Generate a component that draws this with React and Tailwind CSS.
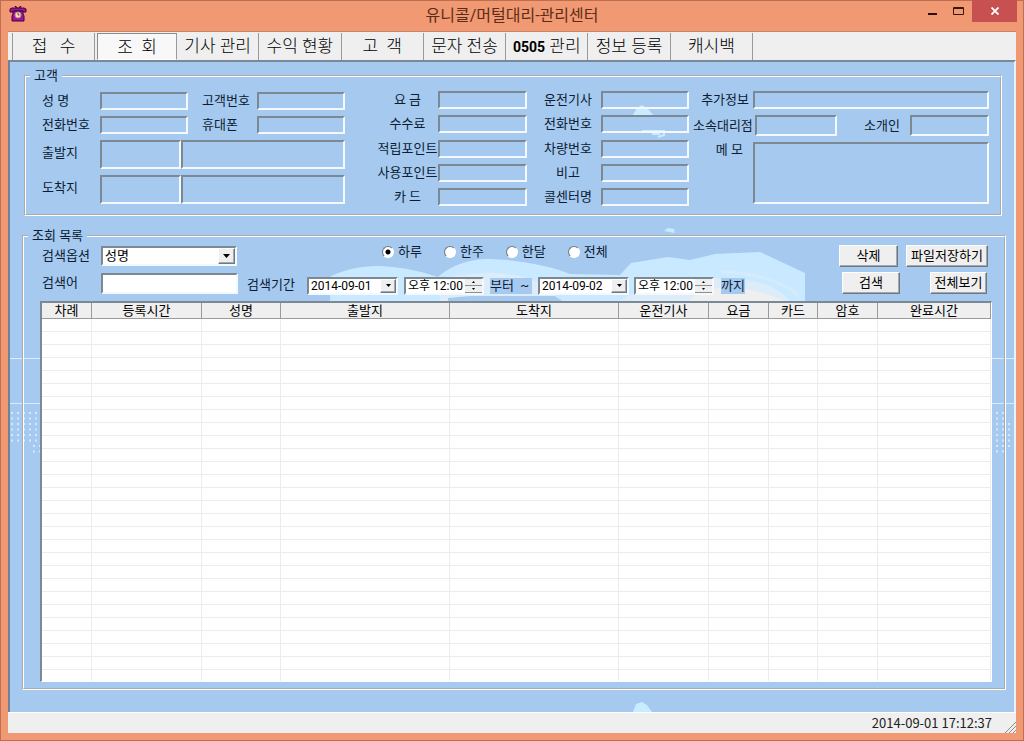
import { useState } from 'react'

const tabs = ['기사 관리', '수익 현황', '고  객', '문자 전송', '0505 관리', '정보 등록', '캐시백']

const columns = [
  { label: '차례', width: 50 },
  { label: '등록시간', width: 110 },
  { label: '성명', width: 79 },
  { label: '출발지', width: 169 },
  { label: '도착지', width: 169 },
  { label: '운전기사', width: 90 },
  { label: '요금', width: 60 },
  { label: '카드', width: 49 },
  { label: '암호', width: 60 },
  { label: '완료시간' },
]

const rows = Array.from({ length: 27 }, (_, i) => i)

const sunken = 'border-2 border-t-[#7c8894] border-l-[#7c8894] border-r-[#f4f9ff] border-b-[#f4f9ff] outline-none'
const raised = 'border border-t-white border-l-white border-r-[#6f7780] border-b-[#6f7780] bg-[#efefef] shadow-[inset_-1px_-1px_0_#a5a9ae]'

function PhoneIcon() {
  return (
    <svg width="18" height="16" viewBox="0 0 18 16" aria-hidden="true">
      <path d="M6 0l2 2M12 0l-2 2" stroke="#2a0a2a" strokeWidth="1.2" />
      <path d="M1 5V3l2-1h12l2 1v3h-4V5H5v1H1z" fill="#a3129f" stroke="#3a0638" />
      <path d="M4 5h10v3l1 2v5H3v-5l1-2z" fill="#a3129f" stroke="#3a0638" />
      <circle cx="9" cy="9" r="3" fill="#f6dfc0" stroke="#c9896c" />
      <path d="M9 7v2h1.500" stroke="#553" fill="none" />
    </svg>
  )
}

function Dots({ x, cols, y, count }) {
  return Array.from({ length: cols * count }, (_, i) => (
    <rect key={i} x={x + (i % cols) * 6} y={y + Math.floor(i / cols) * 5.5} width="2" height="2" fill="#d4e9ff" />
  ))
}

function Wallpaper() {
  return (
    <svg className="absolute inset-0 w-full h-full" viewBox="10 62 1004 650" preserveAspectRatio="none" aria-hidden="true">
      <path d="M10 358.500H1014M10 403.500H1014" stroke="#d8ebff" />
      <path d="M330 301L331 276C350 267 372 264 392 267C412 269 425 273 438 277C452 264 474 258 490 259C520 260 552 266 570 274L620 275L631 263L668 257L690 260L715 254L760 252L805 273V301Z" fill="#c8e9ff" />
      <path d="M438 279C460 274 480 273 496 273C530 276 550 284 560 301H620C640 284 690 277 730 278C760 280 780 288 790 301H440Z" fill="#dcedf9" />
      <path d="M722 272C752 272 785 282 800 297" stroke="#d6ebfa" strokeWidth="3" fill="none" />
      <path d="M690 301C700 285 740 281 784 301Z" fill="#efefef" />
      <path d="M448 301V298L470 296H555L562 301Z" fill="#a6c9ef" />
      <path d="M632 116L637 108L642 105L648 109L655 117Z" fill="#cbe9ff" />
      <path d="M642 131H664V135L658 137M652 134H660" stroke="#cbe9ff" strokeWidth="2" fill="none" />
      <path d="M664 231L668 228L674 229L675 233Z" fill="#cbe9ff" />
      <path d="M633 712L636 704L642 702L647 705L652 712Z" fill="#c8ecff" />
      <Dots x={11} cols={5} y={412} count={6} />
      <Dots x={33} cols={2} y={445} count={2} />
      <Dots x={996} cols={2} y={412} count={8} />
      <Dots x={1008} cols={1} y={423} count={5} />
    </svg>
  )
}

function Field({ id, label, labelClass = '', className = '' }) {
  return (
    <>
      <label htmlFor={id} className={`shrink-0 whitespace-pre ${labelClass}`}>{label}</label>
      <input id={id} readOnly className={`min-w-0 bg-transparent ${sunken} ${className}`} />
    </>
  )
}

function AddressField({ id, label }) {
  return (
    <div className="flex h-[29px] items-center">
      <Field id={id} label={label} labelClass="w-[58px] pb-1" className="h-full w-[81px]" />
      <input aria-label={`${label} 상세`} readOnly className={`h-full min-w-0 flex-1 bg-transparent ${sunken}`} />
    </div>
  )
}

function DateBox({ label, value }) {
  return (
    <div className={`relative flex h-[18px] w-[91px] shrink-0 bg-white ${sunken}`}>
      <select aria-label={label} defaultValue={value} className="w-full appearance-none bg-transparent pl-[2px] text-xs leading-[14px] text-black outline-none">
        <option>{value}</option>
      </select>
      <span className={`pointer-events-none absolute inset-y-0 right-0 flex w-4 items-center justify-center ${raised}`}>
        <svg width="5" height="3" viewBox="0 0 5 3" aria-hidden="true"><path d="M0 0h5L2.500 3z" /></svg>
      </span>
    </div>
  )
}

function TimeBox({ label }) {
  return (
    <div className={`flex h-[18px] w-[80px] shrink-0 bg-white ${sunken}`}>
      <input aria-label={label} defaultValue="오후 12:00" className="min-w-0 flex-1 bg-transparent pl-[2px] text-xs leading-[14px] text-black outline-none" />
      <div className="flex w-[17px] flex-col">
        <button aria-label={`${label} 증가`} className="flex flex-1 items-center justify-center border-b border-[#8b8f94] bg-[#efefef]">
          <svg width="3" height="2" viewBox="0 0 3 2" aria-hidden="true"><path d="M0 2h3L1.500 0z" /></svg>
        </button>
        <button aria-label={`${label} 감소`} className="flex flex-1 items-center justify-center border-b border-[#8b8f94] bg-[#efefef]">
          <svg width="3" height="2" viewBox="0 0 3 2" aria-hidden="true"><path d="M0 0h3L1.500 2z" /></svg>
        </button>
      </div>
    </div>
  )
}

function CustomerPanel() {
  return (
    <fieldset className="relative mr-3 ml-[14px] border-2 border-white pt-[7px] pr-[11px] pb-2 pl-4 [border-style:groove]">
      <legend className="-ml-3 px-1 leading-4">고객</legend>
      <div className="flex min-h-[115px]">
        <div className="flex w-[303px] shrink-0 flex-col gap-[6px] pt-px">
          {[['name', '성 명', 'no', '고객번호'], ['tel', '전화번호', 'mobile', '휴대폰']].map(([a, al, b, bl]) => (
            <div key={a} className="flex h-[18px] items-center">
              <Field id={a} label={al} labelClass="w-[58px]" className="h-full w-[88px]" />
              <Field id={b} label={bl} labelClass="ml-[14px] w-[55px]" className="h-full flex-1" />
            </div>
          ))}
          <AddressField id="from" label="출발지" />
          <AddressField id="to" label="도착지" />
        </div>
        <div className="ml-8 flex w-[150px] shrink-0 flex-col justify-between">
          {[['fare', '요 금'], ['fee', '수수료'], ['save', '적립포인트'], ['use', '사용포인트'], ['card', '카 드']].map(([id, label]) => (
            <div key={id} className="flex h-[18px] items-center">
              <Field id={id} label={label} labelClass="w-[61px] text-center" className="h-full flex-1" />
            </div>
          ))}
        </div>
        <div className="ml-4 flex w-[146px] shrink-0 flex-col justify-between">
          {[['driver', '운전기사'], ['dtel', '전화번호'], ['car', '차량번호'], ['note', '비고'], ['center', '콜센터명']].map(([id, label]) => (
            <div key={id} className="flex h-[18px] items-center">
              <Field id={id} label={label} labelClass="w-[58px] pr-2 text-center" className="h-full flex-1" />
            </div>
          ))}
        </div>
        <div className="ml-1 flex min-w-0 flex-1 flex-col gap-[6px]">
          <div className="flex h-[18px] items-center">
            <Field id="extra" label="추가정보" labelClass="w-[60px] pr-1 text-right" className="h-full flex-1" />
          </div>
          <div className="flex h-[21px] items-center">
            <Field id="agency" label="소속대리점" labelClass="w-[62px]" className="h-full w-[82px]" />
            <Field id="ref" label="소개인" labelClass="ml-auto w-[46px]" className="h-full w-[79px]" />
          </div>
          <div className="flex flex-1">
            <label htmlFor="memo" className="w-[60px] shrink-0 pr-[10px] text-right whitespace-pre">메 모</label>
            <textarea id="memo" readOnly className={`h-[62px] min-w-0 flex-1 resize-none ${sunken}`} />
          </div>
        </div>
      </div>
    </fieldset>
  )
}

function SearchPanel() {
  const [period, setPeriod] = useState('하루')

  return (
    <fieldset className="relative mt-3 mr-2 mb-[22px] ml-3 min-w-0 border-2 border-white pb-[6px] [border-style:groove]">
      <legend className="ml-1 px-1 leading-4">조회 목록</legend>
      <div className="flex h-6 items-center pr-4 pl-[18px]">
        <label htmlFor="option" className="w-[59px] shrink-0">검색옵션</label>
        <div className={`relative h-5 w-[136px] shrink-0 bg-white ${sunken}`}>
          <select id="option" className="h-4 w-full appearance-none bg-transparent pl-[2px] leading-4 text-black outline-none">
            <option>성명</option>
          </select>
          <span className={`pointer-events-none absolute inset-y-0 right-0 flex w-[17px] items-center justify-center ${raised}`}>
            <svg width="7" height="4" viewBox="0 0 7 4" aria-hidden="true"><path d="M0 0h7L3.500 4z" /></svg>
          </span>
        </div>
        <div className="mb-2 ml-[145px] flex gap-[22px]">
          {['하루', '한주', '한달', '전체'].map((p) => (
            <label key={p} className="flex items-center gap-1 leading-4">
              <input
                type="radio"
                name="period"
                checked={period === p}
                onChange={() => setPeriod(p)}
                className="size-3 appearance-none rounded-full border border-t-[#6f7780] border-r-white border-b-white border-l-[#6f7780] bg-white checked:bg-[radial-gradient(circle,#000_2px,#fff_3px)]"
              />
              {p}
            </label>
          ))}
        </div>
        <div className="ml-auto flex shrink-0 gap-2">
          <button className={`h-[22px] w-[59px] text-black ${raised}`}>삭제</button>
          <button className={`h-[22px] w-[82px] text-black ${raised}`}>파일저장하기</button>
        </div>
      </div>
      <div className="mt-1 flex h-[22px] items-center pr-[17px] pl-[18px]">
        <label htmlFor="keyword" className="w-[59px] shrink-0">검색어</label>
        <input id="keyword" className={`h-[21px] w-[137px] bg-white ${sunken}`} />
        <span className="mt-1 ml-[9px] w-[60px] shrink-0">검색기간</span>
        <div className="mt-[5px] flex items-center">
          <DateBox label="시작일" value="2014-09-01" />
          <span className="w-[6px]" />
          <TimeBox label="시작 시간" />
          <span className="mx-[6px] w-[42px] shrink-0 bg-[#a6c9ef] leading-4 whitespace-pre">부터  ~</span>
          <DateBox label="종료일" value="2014-09-02" />
          <span className="w-[5px]" />
          <TimeBox label="종료 시간" />
          <span className="ml-[7px] bg-[#a6c9ef] leading-4">까지</span>
        </div>
        <div className="ml-auto flex shrink-0 gap-[30px]">
          <button className={`h-[22px] w-[58px] text-black ${raised}`}>검색</button>
          <button className={`h-[22px] w-[57px] text-black ${raised}`}>전체보기</button>
        </div>
      </div>
      <div className="mt-[7px] mr-3 ml-4 border-t-2 border-r border-b border-l-2 border-t-[#7c8894] border-r-white border-b-white border-l-[#7c8894] bg-white">
        <table className="w-full table-fixed border-separate border-spacing-0">
          <colgroup>
            {columns.map((c) => <col key={c.label} style={{ width: c.width }} />)}
          </colgroup>
          <thead>
            <tr>
              {columns.map((c) => (
                <th key={c.label} className="h-4 border-r border-b border-[#9a9a9a] bg-[#efefef] p-0 leading-[15px] font-normal text-black">{c.label}</th>
              ))}
            </tr>
          </thead>
          <tbody>
            {rows.map((r) => (
              <tr key={r}>
                {columns.map((c) => <td key={c.label} className="h-[13px] border-r border-b border-[#ececec] p-0" />)}
              </tr>
            ))}
            <tr>
              {columns.map((c) => <td key={c.label} className="h-[11px] border-r border-[#ececec] p-0" />)}
            </tr>
          </tbody>
        </table>
      </div>
    </fieldset>
  )
}

export default function App() {
  return (
    <div className="flex min-h-screen flex-col border border-[#bd6f52] bg-[#f09972] px-[7px] pb-[7px] font-['Roboto','Noto_Sans_CJK_KR',sans-serif] text-[13px] leading-4 text-[#0b1c33]">
      <header className="relative flex h-[30px] items-center justify-center">
        <span className="absolute top-[5px] left-[1px]"><PhoneIcon /></span>
        <h1 className="text-base leading-6 text-[#5c2c17]">유니콜/머털대리-관리센터</h1>
        <div className="absolute -top-px -right-px flex h-[22px]">
          <button aria-label="최소화" className="flex w-[26px] items-center justify-center">
            <svg width="9" height="8" viewBox="0 0 9 8" aria-hidden="true"><path d="M0 6h9v2H0z" fill="#2a1008" /></svg>
          </button>
          <button aria-label="최대화" className="flex w-[27px] items-center justify-center">
            <svg width="11" height="8" viewBox="0 0 11 8" aria-hidden="true"><path d="M.5 .5h10v7H.5zM.5 1.500h10" fill="none" stroke="#3a180c" /></svg>
          </button>
          <button aria-label="닫기" className="flex w-[45px] items-center justify-center bg-[#c75050]">
            <svg width="8" height="8" viewBox="0 0 8 8" aria-hidden="true"><path d="M.5 .5l7 7M7.500 .5l-7 7" stroke="#fff" strokeWidth="1.800" /></svg>
          </button>
        </div>
      </header>

      <nav className="flex h-[29px] border-t border-[#c98468] bg-[#efefef] pt-px pl-1 text-[17px] leading-6 font-light text-black">
        <button className="w-[83px] border-x border-[#9a9a9a] pb-[2px] whitespace-pre">접   수</button>
        <button className="ml-[2px] w-[80px] border border-t-[#8a8a8a] border-r-[#9a9a9a] border-b-white border-l-[#8a8a8a] bg-[#f8f8f8] whitespace-pre">조  회</button>
        <div className="grid w-[576px] grid-cols-7">
          {tabs.map((t) => (
            <button key={t} className="border-r border-[#9a9a9a] pb-[2px] whitespace-pre">
              {t.startsWith('0505') ? <><b className="text-sm font-bold">0505</b>{t.slice(4)}</> : t}
            </button>
          ))}
        </div>
      </nav>

      <main className="relative flex-1 border-t-2 border-r-2 border-l-2 border-t-[#7c8894] border-r-[#e8f2fd] border-l-[#6f8195] bg-[#a6c9ef] pt-[6px]">
        <Wallpaper />
        <CustomerPanel />
        <SearchPanel />
      </main>

      <footer className="flex h-[21px] items-center justify-end border-t border-white bg-[#efefef] text-[#222]">
        <time className="mr-3 font-['Noto_Sans_CJK_KR',sans-serif]">2014-09-01 17:12:37</time>
        <svg width="12" height="12" viewBox="0 0 12 12" className="self-end" aria-hidden="true">
          <path d="M1 12L12 1M5 12l7-7M9 12l3-3" stroke="#8c8c8c" />
        </svg>
      </footer>
    </div>
  )
}
